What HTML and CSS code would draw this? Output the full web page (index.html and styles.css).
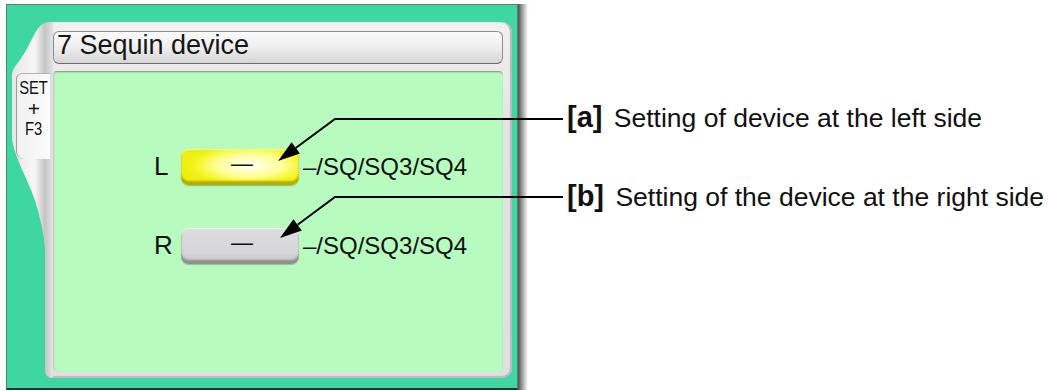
FILE: index.html
```html
<!DOCTYPE html>
<html lang="en">

<head>
    <meta charset="UTF-8">
    <title>Sequin device</title>
    <link rel="stylesheet" href="styles.css">
</head>

<body>
    <div class="page">
        <div class="screen">
            <div class="frame">
                <!-- Side tab with the shortcut -->
                <div class="side">
                    <svg class="side-shape" viewBox="0 0 41 356" preserveAspectRatio="none">
                        <defs>
                            <linearGradient id="rim" x1="0" y1="0" x2="1" y2="0">
                                <stop offset="0" stop-color="#e6e6e6"/>
                                <stop offset="0.55" stop-color="#f7f7f7"/>
                                <stop offset="0.8" stop-color="#c4c4c4"/>
                                <stop offset="1" stop-color="#e4e4e4"/>
                            </linearGradient>
                        </defs>
                        <path d="M41,0 L38,0 C32,0 28,3 25,8 C21,14 15,28 8,38 C5,42 1,46 0,52 L0,118 C4,140 20,165 25,185 C29,200 32,212 33,228 L33,348 Q33,356 41,356 Z" fill="url(#rim)"/>
                    </svg>
                    <div class="tab">
                        <span>SET</span>
                        <span class="plus">+</span>
                        <span>F3</span>
                    </div>
                </div>

                <!-- Main panel -->
                <div class="panel">
                    <div class="title">7 Sequin device</div>
                    <div class="content">
                        <div class="row">
                            <span class="row-label">L</span>
                            <span class="btn btn-on">—</span>
                            <span class="options">–/SQ/SQ3/SQ4</span>
                        </div>
                        <div class="row">
                            <span class="row-label">R</span>
                            <span class="btn">—</span>
                            <span class="options">–/SQ/SQ3/SQ4</span>
                        </div>
                    </div>
                </div>
            </div>
            <div class="frame-shadow"></div>
        </div>

        <div class="notes">
            <div class="note"><b class="tag">[a]</b> Setting of device at the left side</div>
            <div class="note"><b class="tag">[b]</b> Setting of the device at the right side</div>
        </div>
    </div>

    <!-- Leader lines -->
    <svg class="callouts" width="1049" height="391" viewBox="0 0 1049 391">
        <path d="M563,119 L335,119 L295.7,148" fill="none" stroke="#000" stroke-width="2"/>
        <polygon points="278,161 299.9,153.6 291.6,142.3" fill="#000"/>
        <path d="M563,197 L335,197 L297.6,224.8" fill="none" stroke="#000" stroke-width="2"/>
        <polygon points="280,238 301.8,230.4 293.4,219.2" fill="#000"/>
    </svg>
</body>

</html>
```

FILE: styles.css
```css
/* General styles */
body {
    font-family: "Liberation Sans", Arial, sans-serif;
    margin: 0;
    padding: 0;
    background: #fff;
    color: #111;
}

.page {
    display: flex;
    align-items: flex-start;
}

/* Machine screen */
.screen {
    display: flex;
    margin: 4px 0 0 6px;
}

.frame {
    box-sizing: border-box;
    width: 512px;
    height: 386px;
    display: flex;
    padding: 17px 5px 10px 5px;
    background: #3fd7a1;
    border: 1px solid #5c7f72;
    border-bottom: 2px solid #25362f;
}

.frame-shadow {
    width: 10px;
    height: 386px;
    background: linear-gradient(to right, #4e4e4e, #9a9a9a 40%, #dcdcdc 80%, #fff);
}

.side {
    width: 41px;
    display: grid;
}

.side-shape {
    grid-area: 1 / 1;
    width: 41px;
    height: 356px;
}

.tab {
    grid-area: 1 / 1;
    align-self: start;
    box-sizing: border-box;
    width: 34px;
    height: 86px;
    margin: 51px 0 0 4px;
    padding-top: 4px;
    display: flex;
    flex-direction: column;
    align-items: center;
    background: linear-gradient(to right, #f0f0f0, #fbfbfb);
    border-left: 1px solid #9c9c9c;
    border-top: 1px solid #b4b4b4;
    border-radius: 6px 0 0 8px;
    font-size: 18px;
    line-height: 20.5px;
}

.tab span {
    transform: scaleX(0.82);
}

.tab .plus {
    font-size: 20px;
    transform: scaleX(1.05);
}

.panel {
    flex: 1;
    display: flex;
    flex-direction: column;
    padding: 9px 9px 6px 0;
    background: linear-gradient(#f1f1f1, #e3e3e3 30%, #e0e0e0);
    border-radius: 0 10px 10px 0;
    box-shadow: inset -2px 0 1px #b8b8b8, inset 0 -2px 1px #bdbdbd;
}

.title {
    box-sizing: content-box;
    height: 27px;
    margin-bottom: 7px;
    padding: 0 0 4px 3px;
    font-size: 27px;
    line-height: 27px;
    color: #161616;
    background: linear-gradient(#fbfbfb, #ececec 55%, #d4d4d4);
    border: 1px solid #8c8c8c;
    border-bottom-color: #6e6e6e;
    border-radius: 6px;
}

.content {
    flex: 1;
    display: flex;
    flex-direction: column;
    gap: 42px;
    padding: 76px 0 0 100px;
    background: #b7fbbf;
    border-top: 1px solid #9c9c9c;
    border-left: 1px solid #c6c6c6;
    border-radius: 4px 4px 4px 6px;
    box-shadow: inset 0 1px 2px rgba(0, 0, 0, 0.12);
}

.row {
    display: flex;
    align-items: center;
    height: 37px;
}

.row-label {
    width: 27px;
    font-size: 26px;
}

.btn {
    box-sizing: border-box;
    width: 118px;
    height: 36px;
    display: flex;
    justify-content: center;
    align-items: center;
    padding: 0 0 5px 4px;
    font-size: 22px;
    border-radius: 8px;
    background: linear-gradient(#dcdcdf, #d6d6d9 70%, #c4c4c6);
    box-shadow: inset 0 -4px 2px #8f8f92, inset 0 1px 1px #f2f2f2, 0 1px 1px rgba(0, 0, 0, 0.25);
}

.btn-on {
    background: radial-gradient(ellipse 55% 60% at 58% 45%, #fffff4, #ffff9a 50%, #f4f41c 85%, #eeee10);
    box-shadow: inset 0 -4px 2px #b3ad00, inset 0 1px 1px #fbfb90, 0 1px 1px rgba(0, 0, 0, 0.25);
}

.options {
    margin-left: 4px;
    font-size: 24px;
}

/* Annotations */
.notes {
    margin-left: 39px;
    padding-top: 102px;
    display: flex;
    flex-direction: column;
    gap: 48px;
}

.note {
    height: 31px;
    font-size: 26.5px;
    line-height: 31px;
    white-space: nowrap;
    color: #111;
}

.tag {
    font-size: 29px;
    line-height: 31px;
    margin-right: 4px;
}

.callouts {
    position: absolute;
    top: 0;
    left: 0;
    pointer-events: none;
}
```
